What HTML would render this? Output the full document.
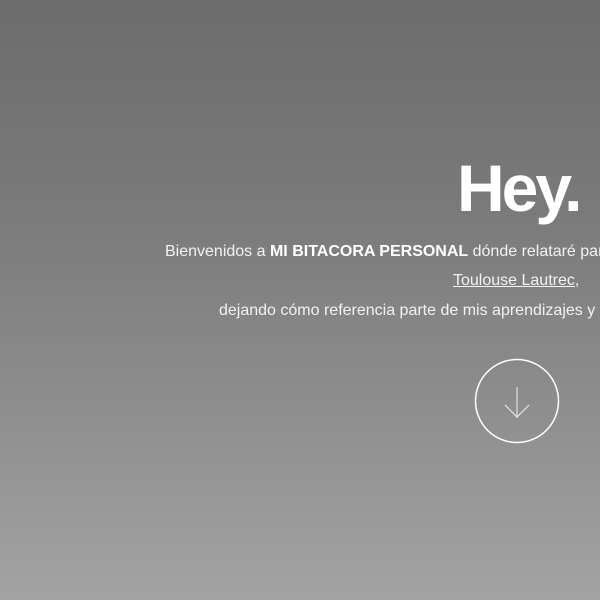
<!DOCTYPE html>
<html><head><meta charset="utf-8"><style>
html,body{margin:0;width:600px;height:600px;overflow:hidden}
body{background:linear-gradient(#6c6c6c,#7a7a7a 35%,#8c8c8c 65%,#a3a3a3);font-family:"Liberation Sans",sans-serif;color:#fff;position:relative}
.t{position:absolute;white-space:nowrap;overflow:hidden}
h1{position:absolute;margin:0;left:457px;top:150px;font-size:66px;font-weight:bold;letter-spacing:-3px;line-height:76px}
.p{font-size:16px;color:#f2f2f2;line-height:20px}
u{text-decoration:underline}
</style></head><body>
<h1>Hey.</h1>
<div class="t p" style="left:165px;top:242px;width:435px">Bienvenidos a <b style="color:#fff">MI BITACORA PERSONAL</b> dónde relataré parte de mi experiencia</div>
<div class="t p" style="left:453px;top:271px"><u>Toulouse Lautrec</u>,</div>
<div class="t p" style="left:219px;top:301px;width:381px">dejando cómo referencia parte de mis aprendizajes y</div>
<svg class="t" style="left:474px;top:358px" width="86" height="86" viewBox="0 0 86 86">
<circle cx="43" cy="43" r="41.5" fill="none" stroke="#fff" stroke-width="1.5"/>
<path d="M43 29V60M31 47L43 59L55 47" fill="none" stroke="#eee" stroke-width="1"/>
</svg>
</body></html>
